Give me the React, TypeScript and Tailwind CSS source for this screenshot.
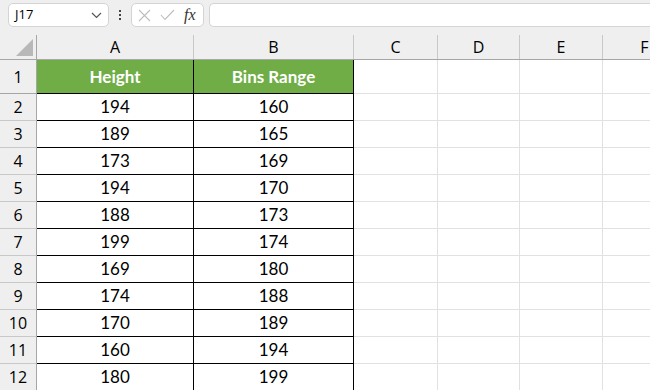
import React from "react";

const rows: [string, string][] = [
  ["194", "160"],
  ["189", "165"],
  ["173", "169"],
  ["194", "170"],
  ["188", "173"],
  ["199", "174"],
  ["169", "180"],
  ["174", "188"],
  ["170", "189"],
  ["160", "194"],
  ["180", "199"],
];

const ui = { fontFamily: '"Open Sans", "Noto Sans", sans-serif' };
const cell = { fontFamily: 'Lato, "Open Sans", sans-serif' };

function EmptyCols() {
  return (
    <>
      <div className="w-[84px] shrink-0 border-r border-[#e1e1e1]" />
      <div className="w-[82px] shrink-0 border-r border-[#e1e1e1]" />
      <div className="w-[83px] shrink-0 border-r border-[#e1e1e1]" />
      <div className="flex-1" />
    </>
  );
}

export default function App() {
  return (
    <div className="w-[650px] h-[390px] overflow-hidden bg-white text-black" style={ui}>
      {/* formula bar */}
      <div className="h-[35px] bg-[#efefef] flex items-start pt-[3px] pl-2 gap-[5px]">
        <div className="w-[101px] h-[24px] bg-white border border-[#d4d4d4] rounded-[5px] flex items-center justify-between pl-[6px] pr-[6px]">
          <span className="text-[13px]">J17</span>
          <svg width="11" height="7" viewBox="0 0 11 7" fill="none" stroke="#555" strokeWidth="1.2">
            <path d="M1 1l4.5 4.5L10 1" />
          </svg>
        </div>
        <div className="w-[12px] h-[24px] flex flex-col items-center justify-center gap-[2px]">
          <span className="w-[2px] h-[2px] bg-[#444]" />
          <span className="w-[2px] h-[2px] bg-[#444]" />
          <span className="w-[2px] h-[2px] bg-[#444]" />
        </div>
        <div className="w-[73px] h-[24px] bg-white border border-[#d4d4d4] rounded-[5px] flex items-center pl-[6px] gap-[9px]">
          <svg width="13" height="13" viewBox="0 0 13 13" stroke="#bdbdbd" strokeWidth="1.1">
            <path d="M1 1l11 11M12 1L1 12" />
          </svg>
          <svg width="15" height="12" viewBox="0 0 15 12" fill="none" stroke="#bdbdbd" strokeWidth="1.1">
            <path d="M1 6l4 4.5L14 1" />
          </svg>
          <span className="text-[16px] italic text-[#333] leading-none" style={{ fontFamily: '"Liberation Serif", serif' }}>
            fx
          </span>
        </div>
        <div className="flex-1 h-[24px] bg-white border border-[#d4d4d4] rounded-l-[5px] border-r-0" />
      </div>

      {/* column headers */}
      <div className="flex h-[25px] bg-[#efefef] border-b border-[#a6a6a6] text-[16px]">
        <div className="w-[37px] shrink-0 border-r border-[#a6a6a6] relative">
          <svg className="absolute left-[16px] top-[4px]" width="17" height="17" viewBox="0 0 17 17">
            <path d="M0 17H17V0Z" fill="#b8b8b8" />
          </svg>
        </div>
        {[
          ["A", "w-[157px]"],
          ["B", "w-[160px]"],
          ["C", "w-[84px]"],
          ["D", "w-[82px]"],
          ["E", "w-[83px]"],
        ].map(([l, w]) => (
          <div key={l} className={`${w} shrink-0 border-r border-[#c8c8c8] flex items-center justify-center`}>
            {l}
          </div>
        ))}
        <div className="w-[83px] shrink-0 flex items-center justify-center">F</div>
      </div>

      {/* row 1 */}
      <div className="flex h-[34px]">
        <div className="w-[37px] shrink-0 bg-[#efefef] border-r border-b border-[#a6a6a6] flex items-center justify-center text-[16px]">
          1
        </div>
        <div className="w-[157px] shrink-0 bg-[#70ad47] border-r border-b border-black flex items-center justify-center text-white font-bold text-[17px]" style={cell}>
          Height
        </div>
        <div className="w-[160px] shrink-0 bg-[#70ad47] border-r border-b border-black flex items-center justify-center text-white font-bold text-[17px]" style={cell}>
          Bins Range
        </div>
        <div className="flex flex-1 border-b border-[#e1e1e1]">
          <EmptyCols />
        </div>
      </div>

      {rows.map(([a, b], i) => (
        <div key={i} className="flex h-[27px]">
          <div className="w-[37px] shrink-0 bg-[#efefef] border-r border-b border-[#c8c8c8] border-r-[#a6a6a6] flex items-center justify-center text-[16px]">
            {i + 2}
          </div>
          <div className="w-[157px] shrink-0 border-r border-b border-black flex items-center justify-center text-[17px]" style={cell}>
            {a}
          </div>
          <div className="w-[160px] shrink-0 border-r border-b border-black flex items-center justify-center text-[17px]" style={cell}>
            {b}
          </div>
          <div className="flex flex-1 border-b border-[#e1e1e1]">
            <EmptyCols />
          </div>
        </div>
      ))}
    </div>
  );
}
